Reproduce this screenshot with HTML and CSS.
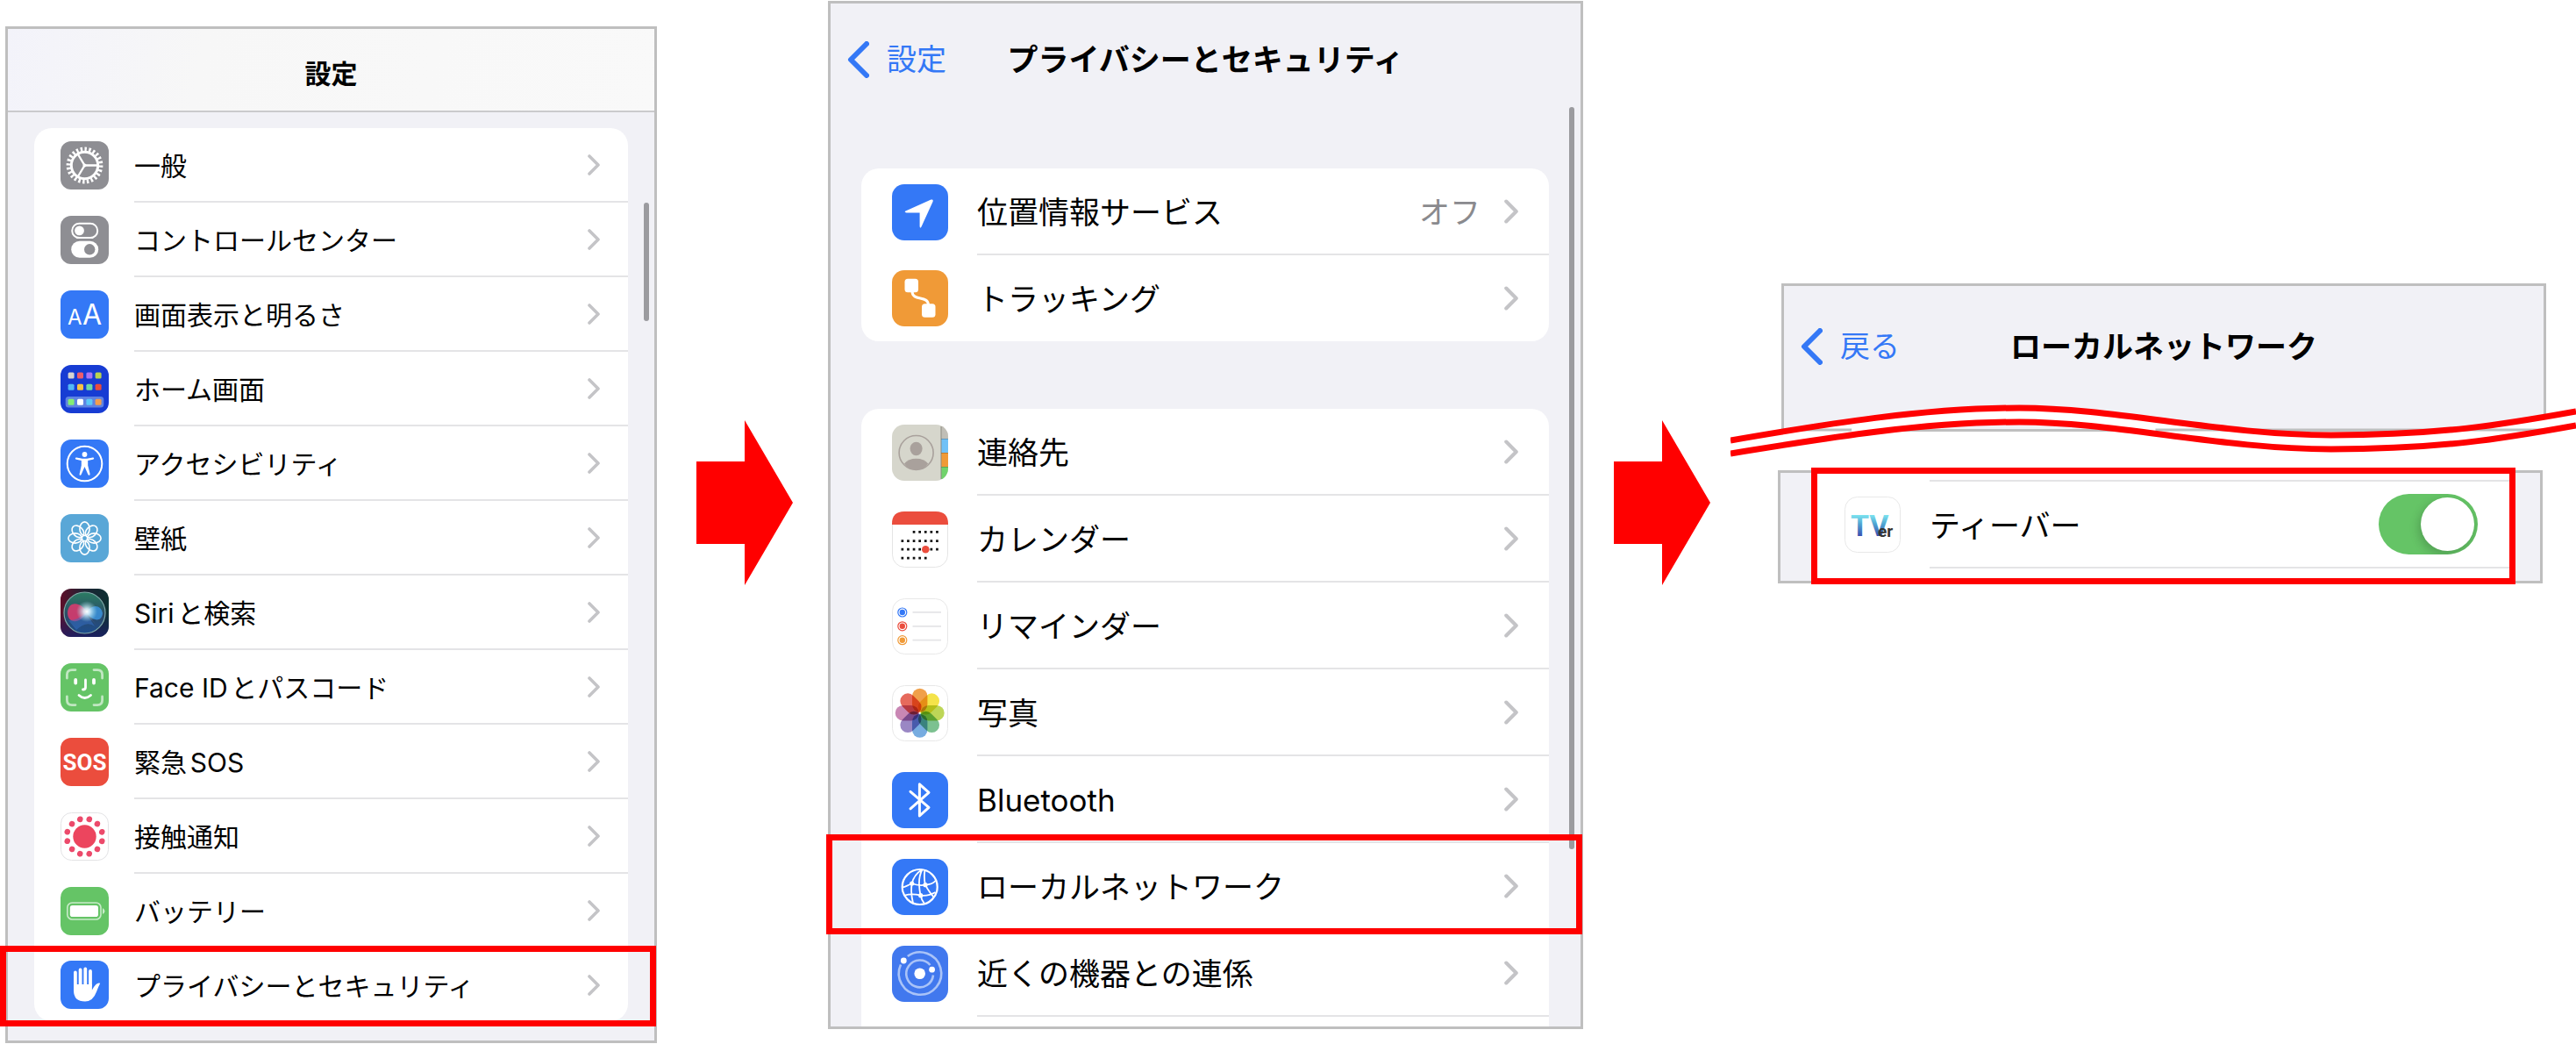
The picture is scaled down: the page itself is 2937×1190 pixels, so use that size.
FILE: index.html
```html
<!DOCTYPE html>
<html lang="ja">
<head>
  <meta charset="UTF-8">
  <title>ローカルネットワークの設定手順</title>
  <link rel="stylesheet" href="styles.css">
</head>
<body>
  <svg class="defs" aria-hidden="true">
    <symbol id="chevron" viewBox="0 0 14 24"><path d="M2 2L12 12L2 22" fill="none" stroke="currentColor" stroke-width="3.6" stroke-linecap="round" stroke-linejoin="round"/></symbol>
    <symbol id="back" viewBox="0 0 25 42"><path d="M22 3L4 21L22 39" fill="none" stroke="currentColor" stroke-width="6" stroke-linecap="round" stroke-linejoin="round"/></symbol>
    <symbol id="arrow" viewBox="0 0 110 188"><path d="M0 47H55V0L110 94L55 188V141H0Z" fill="#f00"/></symbol>
  </svg>

  <main class="steps">
    <!-- 1. 設定 -->
    <section class="screen settings">
      <header class="bar bar-top">
        <h1>設定</h1>
      </header>
      <ul class="card">
        <li><a class="row" href="#">
          <svg class="icon" viewBox="0 0 55 55"><rect width="55" height="55" rx="12" fill="#8e8e93"/>
            <g fill="none" stroke="#fff">
              <circle cx="27.5" cy="27.5" r="15.2" stroke-width="3"/>
              <circle cx="27.5" cy="27.5" r="18.6" stroke-width="4.6" pathLength="48" stroke-dasharray="1 1"/>
              <path d="M27.5 27.5H42M27.5 27.5L20 15M27.5 27.5L20 40" stroke-width="2.4"/>
            </g>
            <circle cx="27.5" cy="27.5" r="2" fill="#fff"/></svg>
          <span class="row-body"><span class="label">一般</span><svg class="chevron"><use href="#chevron"/></svg></span>
        </a></li>
        <li><a class="row" href="#">
          <svg class="icon" viewBox="0 0 55 55"><rect width="55" height="55" rx="12" fill="#8e8e93"/>
            <rect x="13.2" y="8.7" width="29" height="16.4" rx="8.2" fill="none" stroke="#fff" stroke-width="2"/>
            <circle cx="21.5" cy="16.9" r="5.4" fill="#fff"/>
            <rect x="12.2" y="28.8" width="31" height="19" rx="9.5" fill="#fff"/>
            <circle cx="33.2" cy="38.3" r="6.2" fill="#8e8e93"/></svg>
          <span class="row-body"><span class="label">コントロールセンター</span><svg class="chevron"><use href="#chevron"/></svg></span>
        </a></li>
        <li><a class="row" href="#">
          <svg class="icon" viewBox="0 0 55 55"><rect width="55" height="55" rx="12" fill="#3478f6"/>
            <text class="glyph" x="8" y="39" font-size="24">A</text><text class="glyph" x="25" y="39" font-size="32">A</text></svg>
          <span class="row-body"><span class="label">画面表示と明るさ</span><svg class="chevron"><use href="#chevron"/></svg></span>
        </a></li>
        <li><a class="row" href="#">
          <svg class="icon" viewBox="0 0 55 55"><rect width="55" height="55" rx="12" fill="#173cd3"/>
            <rect x="5.7" y="36" width="43.6" height="12.4" rx="3.5" fill="#5f83e2"/>
            <rect x="8.6" y="8.6" width="7" height="7" rx="1.5" fill="#d8d5d0"/><rect x="19" y="8.6" width="7" height="7" rx="1.5" fill="#ee5d6c"/><rect x="29.4" y="8.6" width="7" height="7" rx="1.5" fill="#a873f5"/><rect x="39.6" y="8.6" width="7" height="7" rx="1.5" fill="#b9d34f"/>
            <rect x="8.6" y="21.8" width="7" height="7" rx="1.5" fill="#53b8f5"/><rect x="19" y="21.8" width="7" height="7" rx="1.5" fill="#f6c244"/><rect x="29.4" y="21.8" width="7" height="7" rx="1.5" fill="#6cd7a5"/><rect x="39.6" y="21.8" width="7" height="7" rx="1.5" fill="#e94c3b"/>
            <rect x="8.6" y="38.8" width="7" height="7" rx="1.5" fill="#83ed75"/><rect x="19" y="38.8" width="7" height="7" rx="1.5" fill="#fff"/><rect x="29.4" y="38.8" width="7" height="7" rx="1.5" fill="#5bc8f8"/><rect x="39.6" y="38.8" width="7" height="7" rx="1.5" fill="#f29e4d"/></svg>
          <span class="row-body"><span class="label">ホーム画面</span><svg class="chevron"><use href="#chevron"/></svg></span>
        </a></li>
        <li><a class="row" href="#">
          <svg class="icon" viewBox="0 0 55 55"><rect width="55" height="55" rx="12" fill="#3478f6"/>
            <circle cx="27.5" cy="27.5" r="19.8" fill="none" stroke="#fff" stroke-width="2"/>
            <circle cx="27.5" cy="17" r="2.9" fill="#fff"/>
            <path d="M18.2 20.6L25 21.8H30L36.8 20.6Q38.2 20.5 38.2 21.6Q38.2 22.4 37 22.7L31.2 24V29.5L33.6 39.2Q33.6 40.8 32.6 40.8Q31.7 40.8 31.2 39.6L27.5 31L23.8 39.6Q23.3 40.8 22.4 40.8Q21.4 40.8 21.6 39.2L23.8 29.5V24L18 22.7Q16.8 22.4 16.8 21.6Q16.9 20.5 18.2 20.6Z" fill="#fff"/></svg>
          <span class="row-body"><span class="label">アクセシビリティ</span><svg class="chevron"><use href="#chevron"/></svg></span>
        </a></li>
        <li><a class="row" href="#">
          <svg class="icon" viewBox="0 0 55 55"><rect width="55" height="55" rx="12" fill="#59a7d7"/>
            <g fill="none" stroke="#fff" stroke-width="1.6">
              <g id="petals"><ellipse cx="27.5" cy="16.7" rx="5.6" ry="7.8"/><ellipse cx="27.5" cy="38.3" rx="5.6" ry="7.8"/><ellipse cx="16.7" cy="27.5" rx="7.8" ry="5.6"/><ellipse cx="38.3" cy="27.5" rx="7.8" ry="5.6"/></g>
              <use href="#petals" transform="rotate(45 27.5 27.5)"/>
            </g></svg>
          <span class="row-body"><span class="label">壁紙</span><svg class="chevron"><use href="#chevron"/></svg></span>
        </a></li>
        <li><a class="row" href="#">
          <svg class="icon" viewBox="0 0 55 55">
            <defs>
              <linearGradient id="siri-bg" x1="0" y1="0" x2="1" y2="0"><stop offset="0" stop-color="#5e0f2a"/><stop offset=".5" stop-color="#1d2333"/><stop offset="1" stop-color="#0d3032"/></linearGradient>
              <linearGradient id="siri-low" x1="0" y1="0" x2="0" y2="1"><stop offset=".5" stop-color="#1b1f6b" stop-opacity="0"/><stop offset="1" stop-color="#1b1f6b" stop-opacity=".8"/></linearGradient>
              <linearGradient id="siri-orb" x1="0" y1="0" x2="0" y2="1"><stop offset="0" stop-color="#2b7d63"/><stop offset=".55" stop-color="#2c4a66"/><stop offset="1" stop-color="#1d4d8f"/></linearGradient>
              <radialGradient id="siri-glow"><stop offset="0" stop-color="#fff"/><stop offset=".3" stop-color="#dff6ff" stop-opacity=".85"/><stop offset="1" stop-color="#9fe0e8" stop-opacity="0"/></radialGradient>
            </defs>
            <rect width="55" height="55" rx="12" fill="url(#siri-bg)"/><rect width="55" height="55" rx="12" fill="url(#siri-low)"/>
            <circle cx="27.5" cy="27.5" r="23.5" fill="url(#siri-orb)" stroke="#7fa9a8" stroke-width="1.2"/>
            <path d="M30 27C24 15 9 13 8 27C8 41 23 40 30 27Z" fill="#e03a6e" opacity=".85"/>
            <path d="M29 27C36 17 46 18 48 28C47 39 36 37 29 27Z" fill="#3b93dd" opacity=".85"/>
            <path d="M9 36Q19 37 29 27L39 43Q30 36 18 47Z" fill="#3670c8" opacity=".5"/>
            <path d="M29 27L41 42L34 33Z" fill="#e48bb0" opacity=".8"/>
            <circle cx="30" cy="26" r="12" fill="url(#siri-glow)"/></svg>
          <span class="row-body"><span class="label">Siriと検索</span><svg class="chevron"><use href="#chevron"/></svg></span>
        </a></li>
        <li><a class="row" href="#">
          <svg class="icon" viewBox="0 0 55 55"><rect width="55" height="55" rx="12" fill="#65c466"/>
            <g fill="none" stroke="#fff" stroke-linecap="round">
              <path d="M7.4 17V13Q7.4 7.6 13 7.6H17M38 7.6H42Q47.6 7.6 47.6 13V17M7.4 38V42Q7.4 47.6 13 47.6H17M38 47.6H42Q47.6 47.6 47.6 42V38" stroke-width="2.8" opacity=".6"/>
              <path d="M17.2 19V22.5M38 19V22.5" stroke-width="3.8"/>
              <path d="M28.5 19V27.5Q28.5 30 25.5 30M21 36.5Q27.5 42.500 34.5 36.5" stroke-width="2.8"/>
            </g></svg>
          <span class="row-body"><span class="label">Face IDとパスコード</span><svg class="chevron"><use href="#chevron"/></svg></span>
        </a></li>
        <li><a class="row" href="#">
          <svg class="icon" viewBox="0 0 55 55"><rect width="55" height="55" rx="12" fill="#eb4d3d"/>
            <text class="glyph sos" x="27.5" y="37" font-size="26" text-anchor="middle">SOS</text></svg>
          <span class="row-body"><span class="label">緊急SOS</span><svg class="chevron"><use href="#chevron"/></svg></span>
        </a></li>
        <li><a class="row" href="#">
          <svg class="icon" viewBox="0 0 55 55"><rect x=".5" y=".5" width="54" height="54" rx="12" fill="#fff" stroke="#e3e3e5"/>
            <circle cx="27.5" cy="27.5" r="13.2" fill="#ec455e"/>
            <circle cx="27.5" cy="27.5" r="20.4" fill="none" stroke="#ec4a6b" stroke-width="6.6" stroke-linecap="round" pathLength="24" stroke-dasharray="0 2" transform="rotate(15 27.5 27.5)"/></svg>
          <span class="row-body"><span class="label">接触通知</span><svg class="chevron"><use href="#chevron"/></svg></span>
        </a></li>
        <li><a class="row" href="#">
          <svg class="icon" viewBox="0 0 55 55"><rect width="55" height="55" rx="12" fill="#65c466"/>
            <rect x="7.8" y="18" width="38.2" height="19" rx="5.5" fill="none" stroke="#fff" stroke-width="1.6" opacity=".65"/>
            <rect x="10.8" y="21" width="32.2" height="13" rx="2.8" fill="#fff"/>
            <path d="M48 24Q50.500 25.500 50.5 27.5T48 31Z" fill="#fff" opacity=".65"/></svg>
          <span class="row-body"><span class="label">バッテリー</span><svg class="chevron"><use href="#chevron"/></svg></span>
        </a></li>
        <li class="marked"><a class="row" href="#">
          <svg class="icon" viewBox="0 0 55 55"><rect width="55" height="55" rx="12" fill="#3478f6"/>
            <path d="M16.9 13.5V30M22.6 10.5V28M28.3 9.5V28M34 12V28" stroke="#fff" stroke-width="3.8" stroke-linecap="round"/>
            <path d="M15 27H35.9V33.5Q38 29.5 40.5 27Q43 24.8 45.2 25.8Q43.5 29 41 35.5Q37 46.5 28 46.5Q15 46.5 15 34Z" fill="#fff"/></svg>
          <span class="row-body"><span class="label">プライバシーとセキュリティ</span><svg class="chevron"><use href="#chevron"/></svg></span>
        </a></li>
      </ul>
      <span class="scrollbar"></span>
    </section>

    <svg class="arrow"><use href="#arrow"/></svg>

    <!-- 2. プライバシーとセキュリティ -->
    <section class="screen privacy large">
      <header class="bar">
        <button class="back" type="button"><svg><use href="#back"/></svg>設定</button>
        <h2>プライバシーとセキュリティ</h2>
      </header>
      <ul class="card">
        <li><a class="row" href="#">
          <svg class="icon" viewBox="0 0 64 64"><rect width="64" height="64" rx="14" fill="#3478f6"/>
            <path d="M15.5 30.5L44.5 17.6Q47.5 16.8 46.5 20L33.5 48.5Q32 51 31.6 48V32.6H16.5Q13.5 32 15.5 30.5Z" fill="#fff"/></svg>
          <span class="row-body"><span class="label">位置情報サービス</span><span class="value">オフ</span><svg class="chevron"><use href="#chevron"/></svg></span>
        </a></li>
        <li><a class="row" href="#">
          <svg class="icon" viewBox="0 0 64 64"><rect width="64" height="64" rx="14" fill="#f09a37"/>
            <rect x="14.5" y="9.8" width="15.5" height="15.5" rx="3.5" fill="#fff"/><rect x="34" y="38.3" width="15.5" height="15.5" rx="3.5" fill="#fff"/>
            <path d="M23 24C23 36 41.5 28 41.5 40" fill="none" stroke="#fff" stroke-width="3"/></svg>
          <span class="row-body"><span class="label">トラッキング</span><svg class="chevron"><use href="#chevron"/></svg></span>
        </a></li>
      </ul>
      <ul class="card card-cut">
        <li><a class="row" href="#">
          <svg class="icon" viewBox="0 0 64 64">
            <defs><clipPath id="contacts"><rect width="64" height="64" rx="14"/></clipPath></defs>
            <g clip-path="url(#contacts)">
              <path d="M0 0H64V64H0Z" fill="#d6d6cc"/>
              <path d="M56 2H64V16H56Z" fill="#c0beb6"/><path d="M56 16H64V32H56Z" fill="#71c1f6"/><path d="M56 32H64V48H56Z" fill="#f09a37"/><path d="M56 48H64V62H56Z" fill="#71d36c"/>
              <path d="M56 2V62" stroke="#8b8a80" stroke-width="1"/><path d="M56 16.5H64M56 32.5H64M56 48.5H64" stroke="#000" stroke-opacity=".2"/>
            </g>
            <circle cx="27.6" cy="32" r="19.5" fill="none" stroke="#a9a19c" stroke-width="1.6"/>
            <ellipse cx="27.6" cy="27.5" rx="7" ry="7.7" fill="#a9a19c"/>
            <path d="M14 44.5Q18.5 38.8 27.6 38.8T41.2 44.5Q36 51.5 27.6 51.5T14 44.5Z" fill="#a9a19c"/></svg>
          <span class="row-body"><span class="label">連絡先</span><svg class="chevron"><use href="#chevron"/></svg></span>
        </a></li>
        <li><a class="row" href="#">
          <svg class="icon" viewBox="0 0 64 64"><rect x=".5" y=".5" width="63" height="63" rx="14" fill="#fff" stroke="#e5e5e5"/>
            <path d="M0 15V14Q0 0 14 0H50Q64 0 64 14V15Z" fill="#eb4d3d"/>
            <g stroke="#111" stroke-width="2.7" stroke-dasharray="2.7 3.9"><path d="M23.7 23.4H53"/><path d="M10.5 33.6H53"/><path d="M10.5 43.2H53"/><path d="M10.5 53.2H40"/></g>
            <circle cx="38.3" cy="43.2" r="4.3" fill="#eb4d3d"/></svg>
          <span class="row-body"><span class="label">カレンダー</span><svg class="chevron"><use href="#chevron"/></svg></span>
        </a></li>
        <li><a class="row" href="#">
          <svg class="icon" viewBox="0 0 64 64"><rect x=".5" y=".5" width="63" height="63" rx="14" fill="#fff" stroke="#e8e8e8"/>
            <g stroke-width="1.2" fill="none"><circle cx="11.8" cy="16" r="5" stroke="#3478f6"/><circle cx="11.8" cy="31.8" r="5" stroke="#eb4d3d"/><circle cx="11.8" cy="47.7" r="5" stroke="#f09a37"/></g>
            <circle cx="11.8" cy="16" r="3.2" fill="#3478f6"/><circle cx="11.8" cy="31.8" r="3.2" fill="#eb4d3d"/><circle cx="11.8" cy="47.7" r="3.2" fill="#f09a37"/>
            <path d="M23.5 15.8H56M23.5 31.8H56M23.5 47.7H56" stroke="#e5e5e7" stroke-width="1.8"/></svg>
          <span class="row-body"><span class="label">リマインダー</span><svg class="chevron"><use href="#chevron"/></svg></span>
        </a></li>
        <li><a class="row" href="#">
          <svg class="icon photos" viewBox="0 0 64 64"><rect x=".5" y=".5" width="63" height="63" rx="14" fill="#fff" stroke="#e8e8e8"/>
            <rect x="23" y="3.7" width="17.4" height="27" rx="8.7" fill="#f0a04a"/>
            <rect x="23" y="3.7" width="17.4" height="27" rx="8.7" fill="#f4e34a" transform="rotate(45 31.7 31.7)"/>
            <rect x="23" y="3.7" width="17.4" height="27" rx="8.7" fill="#bdd657" transform="rotate(90 31.7 31.7)"/>
            <rect x="23" y="3.7" width="17.4" height="27" rx="8.7" fill="#7cc190" transform="rotate(135 31.7 31.7)"/>
            <rect x="23" y="3.7" width="17.4" height="27" rx="8.7" fill="#77ace0" transform="rotate(180 31.7 31.7)"/>
            <rect x="23" y="3.7" width="17.4" height="27" rx="8.7" fill="#9a87c4" transform="rotate(225 31.7 31.7)"/>
            <rect x="23" y="3.7" width="17.4" height="27" rx="8.7" fill="#c987b4" transform="rotate(270 31.7 31.7)"/>
            <rect x="23" y="3.7" width="17.4" height="27" rx="8.7" fill="#e66a5c" transform="rotate(315 31.7 31.7)"/></svg>
          <span class="row-body"><span class="label">写真</span><svg class="chevron"><use href="#chevron"/></svg></span>
        </a></li>
        <li><a class="row" href="#">
          <svg class="icon" viewBox="0 0 64 64"><rect width="64" height="64" rx="14" fill="#3478f6"/>
            <path d="M21 22.3L42 40.3L31.4 50V13.8L42 23.3L21 41.8" fill="none" stroke="#fff" stroke-width="3" stroke-linecap="round" stroke-linejoin="round"/></svg>
          <span class="row-body"><span class="label">Bluetooth</span><svg class="chevron"><use href="#chevron"/></svg></span>
        </a></li>
        <li class="marked"><a class="row" href="#">
          <svg class="icon" viewBox="0 0 64 64"><rect width="64" height="64" rx="14" fill="#3478f6"/>
            <g fill="none" stroke="#fff" stroke-width="1.8">
              <circle cx="31.7" cy="32" r="20" stroke-width="2.2"/>
              <path d="M34.5 12Q25 18 22.7 28Q21 38 24 50.5M34.5 12Q30.5 20 31 29.5Q31.5 38 32.7 41.7Q33.5 47 37 51M37.5 12.5Q36 21 38 29.7Q41 36 47.5 43.5"/>
              <path d="M12 32.5Q16 31.5 22.7 28Q30 31 38 29.7Q46 29 49.5 25M14.5 41.5Q23 39 32.7 41.7Q42 42.5 49.5 38"/>
            </g>
            <g fill="#fff"><circle cx="22.7" cy="28" r="2.6"/><circle cx="38" cy="29.7" r="2.6"/><circle cx="32.7" cy="41.7" r="2.6"/></g></svg>
          <span class="row-body"><span class="label">ローカルネットワーク</span><svg class="chevron"><use href="#chevron"/></svg></span>
        </a></li>
        <li><a class="row" href="#">
          <svg class="icon" viewBox="0 0 64 64"><rect width="64" height="64" rx="14" fill="#4178ee"/>
            <g fill="none" stroke="#a9c3f8" stroke-width="2.6">
              <path d="M17.8 12A24.200 24.200 0 1 1 10 21.500"/>
              <path d="M47 33.5A15.4 15.4 0 1 1 43.5 22"/>
            </g>
            <circle cx="31.7" cy="31.7" r="6.3" fill="#fff"/><circle cx="13.3" cy="17" r="3.4" fill="#fff"/><circle cx="45.6" cy="27.2" r="3.4" fill="#fff"/></svg>
          <span class="row-body"><span class="label">近くの機器との連係</span><svg class="chevron"><use href="#chevron"/></svg></span>
        </a></li>
      </ul>
      <span class="scrollbar"></span>
    </section>

    <svg class="arrow"><use href="#arrow"/></svg>

    <!-- 3. ローカルネットワーク -->
    <section class="detail large">
      <div class="screen detail-head">
        <header class="bar">
          <button class="back" type="button"><svg><use href="#back"/></svg>戻る</button>
          <h2>ローカルネットワーク</h2>
        </header>
      </div>
      <svg class="wave" viewBox="0 0 963 62" preserveAspectRatio="none">
        <path d="M0 41C110 22 220 4 329 4S560 35 684 35S880 23 963 8V24C880 39 808 51 684 51S438 20 329 20S110 38 0 56Z" fill="#fff"/>
        <path d="M80 29H138M484 29H929" stroke="#bfbfbf" stroke-width="3"/>
        <path d="M0 41C110 22 220 4 329 4S560 35 684 35S880 23 963 8M0 56C110 38 220 20 329 20S560 51 684 51S880 39 963 24" fill="none" stroke="#f00" stroke-width="7"/>
      </svg>
      <div class="screen detail-list">
        <div class="card marked">
          <div class="row">
            <svg class="icon" viewBox="0 0 64 64">
              <defs><linearGradient id="tver" gradientUnits="userSpaceOnUse" x1="0" y1="20" x2="0" y2="45"><stop offset="0" stop-color="#82eaf3"/><stop offset=".45" stop-color="#4fa5d2"/><stop offset="1" stop-color="#3a50b0"/></linearGradient></defs>
              <rect x=".5" y=".5" width="63" height="63" rx="14" fill="#fff" stroke="#e8e8e8"/>
              <text class="logo" x="7" y="45" font-size="34" fill="url(#tver)">TV<tspan x="38" y="46" font-size="19" fill="#333">er</tspan></text></svg>
            <span class="row-body"><label class="label" for="tver-switch">ティーバー</label><input class="switch" id="tver-switch" type="checkbox" checked></span>
          </div>
        </div>
      </div>
    </section>
  </main>
</body>
</html>
```

FILE: styles.css
```css
:root {
  --bg: #f1f1f6;
  --frame: #bfbfbf;
  --line: #e4e4e6;
  --blue: #3478f6;
  --mark: #f00;
}

* {
  box-sizing: border-box;
}

body {
  margin: 0;
  background: #fff;
  color: #000;
  font-family: Inter, "Noto Sans CJK JP", sans-serif;
  text-autospace: normal;
}

h1, h2, ul {
  margin: 0;
  padding: 0;
}

ul {
  list-style: none;
}

svg {
  display: block;
}

.defs {
  position: absolute;
  width: 0;
  height: 0;
}

.steps {
  display: grid;
  grid-template-columns: 743fr 195fr 861fr 180fr 952fr;
  align-items: start;
  padding-left: 6px;
}

.arrow {
  width: 110px;
  height: 188px;
  margin-top: 479px;
  justify-self: center;
}

.settings + .arrow {
  justify-self: end;
  margin-right: 40px;
}

/* screen */
.screen {
  position: relative;
  border: 3px solid var(--frame);
  background: var(--bg);
  font-size: 30px;
}

.large .row,
.large .bar,
.large.screen {
  font-size: 35px;
}

.bar {
  display: grid;
  grid-template-columns: 1fr auto 1fr;
  align-items: center;
  height: 128px;
}

.bar h1,
.bar h2 {
  grid-column: 2;
  font-size: inherit;
  font-weight: 700;
  line-height: 1;
}

.back {
  display: flex;
  align-items: center;
  gap: 20px;
  padding: 0 0 0 19px;
  border: 0;
  background: none;
  color: var(--blue);
  font: inherit;
  font-size: 34px;
  line-height: 1;
}

.back svg {
  width: 25px;
  height: 42px;
}

/* list */
.card {
  background: #fff;
  border-radius: 20px;
}

.row {
  display: flex;
  align-items: center;
  gap: 29px;
  padding-left: 30px;
  color: inherit;
  text-decoration: none;
}

.row-body {
  flex: 1;
  display: flex;
  align-items: center;
  height: 85px;
  padding-right: 32px;
  border-bottom: 2px solid var(--line);
}

li:last-child .row-body {
  height: 83px;
  border-bottom: 0;
}

.label {
  flex: 1;
  padding-top: 3px;
  line-height: 1;
  white-space: nowrap;
}

.value {
  margin-right: 27px;
  padding-top: 3px;
  color: #8a8a8e;
  line-height: 1;
}

.icon {
  width: 55px;
  height: 55px;
}

.chevron {
  width: 14px;
  height: 24px;
  color: #c4c4c7;
}

.large .row {
  gap: 33px;
  padding-left: 35px;
}

.large .row-body {
  height: 99px;
  padding-right: 35px;
}

.large li:last-child .row-body {
  height: 98px;
}

.large .icon {
  width: 64px;
  height: 64px;
}

.large .chevron {
  width: 16px;
  height: 28px;
}

.glyph {
  fill: #fff;
  font-family: Inter, sans-serif;
}

.sos {
  font-family: "Liberation Sans Narrow", Roboto, sans-serif;
  font-weight: 700;
}

.logo {
  font-family: Roboto, sans-serif;
  font-weight: 700;
}

.photos rect {
  mix-blend-mode: multiply;
}

.photos {
  isolation: isolate;
}

.scrollbar {
  position: absolute;
  right: 6px;
  width: 6px;
  border-radius: 3px;
  background: #9b9b9f;
}

/* red frame around the item to tap */
.marked {
  position: relative;
}

.marked::after {
  content: "";
  position: absolute;
  z-index: 1;
  border: 7px solid var(--mark);
  pointer-events: none;
}

/* 1 */
.settings {
  margin-top: 30px;
  padding-bottom: 22px;
}

.bar-top {
  height: 95px;
  padding-top: 9px;
  border-bottom: 2px solid #cacacc;
  background: linear-gradient(100deg, #f3f3fa, #f7f7f7 30%, #f9f9f9);
}

.settings .card {
  margin: 18px 30px 0;
}

.settings .scrollbar {
  top: 198px;
  height: 135px;
}

.settings .marked::after {
  inset: -3px -32px -6px -39px;
}

/* 2 */
.privacy {
  margin-top: 1px;
}

.privacy .card {
  margin: 60px 36px 0 35px;
}

.privacy .card-cut {
  margin-top: 77px;
  padding-bottom: 11px;
  border-radius: 20px 20px 0 0;
}

.privacy .card-cut li:last-child .row-body {
  height: 99px;
  border-bottom: 2px solid var(--line);
}

.privacy .scrollbar {
  top: 118px;
  right: 7px;
  height: 846px;
}

.privacy .marked::after {
  inset: -10px -38px -5px -40px;
}

/* 3 */
.detail {
  position: relative;
  margin-top: 323px;
  padding: 0 34px 0 42px;
}

.detail-head {
  height: 169px;
  margin-left: 4px;
}

.detail-head .bar {
  height: 138px;
}

.wave {
  position: absolute;
  top: 138px;
  left: -12px;
  width: calc(100% + 12px);
  height: 62px;
}

.detail-list {
  margin: 44px 4px 0 0;
}

.detail-list .card {
  margin: 0 31px 0 38px;
  padding: 8px 0 14px;
  border-radius: 0;
}

.detail-list .row-body {
  height: 101px;
  padding-right: 40px;
  border-top: 2px solid var(--line);
}

.detail-list .marked::after {
  inset: -6px -3px -4px;
}

.switch {
  appearance: none;
  width: 113px;
  height: 69px;
  margin: 0;
  padding: 4px;
  overflow: hidden;
  border-radius: 35px;
  background: #d8d8dc;
}

.switch::before {
  content: "";
  display: block;
  width: 61px;
  height: 61px;
  border-radius: 50%;
  background: #fff;
  box-shadow: -2px 4px 12px rgba(0, 0, 0, 0.2);
}

.switch:checked {
  background: #65c466;
}

.switch:checked::before {
  margin-left: auto;
}
```
